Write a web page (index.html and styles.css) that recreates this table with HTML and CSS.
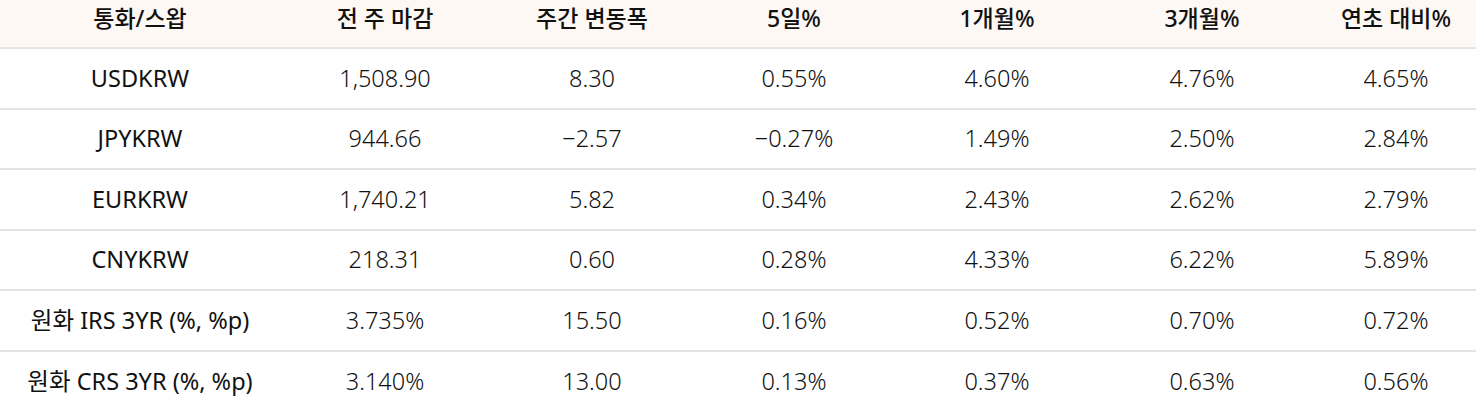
FILE: index.html
```html
<!DOCTYPE html>
<html lang="ko">
<head>
<meta charset="utf-8">
<link rel="stylesheet" href="styles.css">
</head>
<body>
<table class="fx">
  <colgroup>
    <col class="c1"><col class="c2"><col class="c3"><col class="c4"><col class="c5"><col class="c6"><col class="c7">
  </colgroup>
  <thead>
    <tr><th>통화/스왑</th><th>전 주 마감</th><th>주간 변동폭</th><th>5일%</th><th>1개월%</th><th>3개월%</th><th>연초 대비%</th></tr>
  </thead>
  <tbody>
    <tr><td>USDKRW</td><td>1,508.90</td><td>8.30</td><td>0.55%</td><td>4.60%</td><td>4.76%</td><td>4.65%</td></tr>
    <tr><td>JPYKRW</td><td>944.66</td><td>−2.57</td><td>−0.27%</td><td>1.49%</td><td>2.50%</td><td>2.84%</td></tr>
    <tr><td>EURKRW</td><td>1,740.21</td><td>5.82</td><td>0.34%</td><td>2.43%</td><td>2.62%</td><td>2.79%</td></tr>
    <tr><td>CNYKRW</td><td>218.31</td><td>0.60</td><td>0.28%</td><td>4.33%</td><td>6.22%</td><td>5.89%</td></tr>
    <tr><td>원화 IRS 3YR (%, %p)</td><td>3.735%</td><td>15.50</td><td>0.16%</td><td>0.52%</td><td>0.70%</td><td>0.72%</td></tr>
    <tr><td>원화 CRS 3YR (%, %p)</td><td>3.140%</td><td>13.00</td><td>0.13%</td><td>0.37%</td><td>0.63%</td><td>0.56%</td></tr>
  </tbody>
</table>
</body>
</html>
```
FILE: styles.css
```css
html, body {
  margin: 0;
  padding: 0;
  background: #ffffff;
}
body {
  font-family: "Noto Sans", "Noto Sans CJK KR", sans-serif;
  color: #111111;
  overflow: hidden;
}
.fx {
  width: 1476px;
  border-collapse: collapse;
  table-layout: fixed;
}
.c1 { width: 280px; }
.c2 { width: 210px; }
.c3 { width: 204px; }
.c4 { width: 200px; }
.c5 { width: 206px; }
.c6 { width: 204px; }
.c7 { width: 172px; }
.fx th {
  background: #fdf8f3;
  font-weight: 500;
  font-size: 23px;
  height: 48px;
  padding: 0 0 10px 0;
  box-sizing: border-box;
  border-bottom: 2px solid #e4e4e4;
  text-align: center;
  line-height: 1;
}
.fx td {
  font-size: 23.5px;
  font-weight: 300;
  height: 58.6px;
  padding: 0;
  text-align: center;
  border-bottom: 2px solid #e4e4e4;
  line-height: 1;
}
.fx td:first-child {
  font-weight: 400;
}
.fx th:last-child, .fx td:last-child {
  padding-left: 12px;
}
```
